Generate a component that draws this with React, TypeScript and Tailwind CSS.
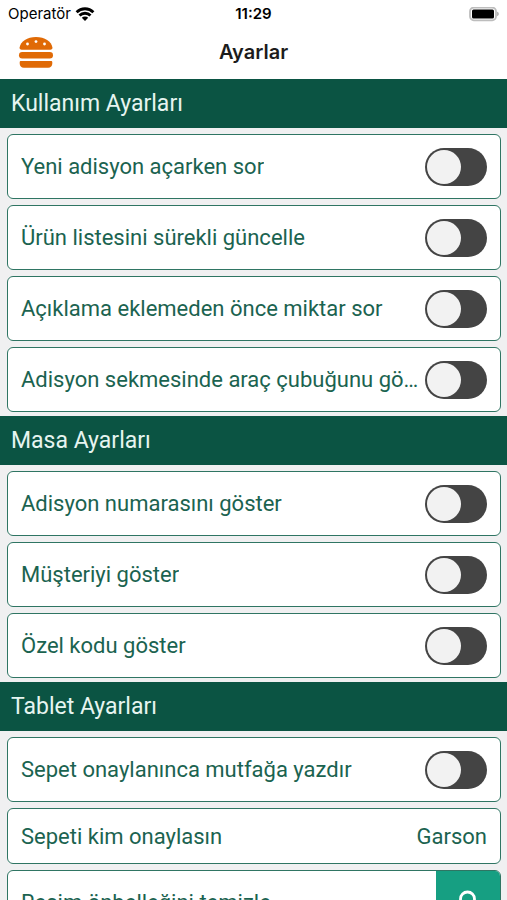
import React, { useState } from 'react';

interface Setting {
  id: string;
  label: string;
}

interface ToggleRowProps {
  setting: Setting;
  checked: boolean;
  onChange: (id: string) => void;
}

const usageSettings: Setting[] = [
  { id: 'askOnNewBill', label: 'Yeni adisyon açarken sor' },
  { id: 'refreshProducts', label: 'Ürün listesini sürekli güncelle' },
  { id: 'askAmountFirst', label: 'Açıklama eklemeden önce miktar sor' },
  { id: 'showToolbar', label: 'Adisyon sekmesinde araç çubuğunu göster' },
];

const tableSettings: Setting[] = [
  { id: 'showBillNumber', label: 'Adisyon numarasını göster' },
  { id: 'showCustomer', label: 'Müşteriyi göster' },
  { id: 'showCustomCode', label: 'Özel kodu göster' },
];

const tabletSettings: Setting[] = [
  { id: 'printToKitchen', label: 'Sepet onaylanınca mutfağa yazdır' },
];

const StatusBar: React.FC = () => (
  <div className="grid h-7 grid-cols-3 items-center px-2 text-[15px] text-black">
    <div className="flex items-center gap-1">
      <span>Operatör</span>
      <svg viewBox="0 0 20 15" className="h-[15px] w-5" aria-hidden="true">
        <g fill="none" stroke="#000" strokeWidth="2.8">
          <path d="M1.6 5.2a12 12 0 0 1 16.8 0" />
          <path d="M4.5 8.5a7.8 7.8 0 0 1 11 0" />
        </g>
        <path d="M10 14l-3.2-3.2a4.5 4.5 0 0 1 6.4 0z" />
      </svg>
    </div>
    <span className="text-center font-semibold">11:29</span>
    <svg viewBox="0 0 31 15" className="h-[15px] w-[31px] justify-self-end" aria-hidden="true">
      <rect x="2" y="0.5" width="26" height="12.8" rx="3.8" fill="#fff" stroke="#bdbdbd" strokeWidth="1.8" />
      <rect x="4" y="2.4" width="22" height="9" rx="1.5" />
      <path d="M29.2 4.8c2 .6 2 3.8 0 4.4z" fill="#a5a5a5" />
    </svg>
  </div>
);

const BurgerIcon: React.FC = () => (
  <svg viewBox="0 0 36 32" className="h-8 w-9" aria-hidden="true">
    <g fill="#e06a06">
      <path d="M3.6 13.8c-1.4 0-2.2-.9-2-2.2C2.6 5.4 9.2 1 18 1s15.4 4.4 16.4 10.6c.2 1.3-.6 2.2-2 2.2z" />
      <rect x="1" y="16" width="34" height="6.4" rx="3.2" />
      <path d="M3 25h30c.8 0 1.3.5 1.3 1.3v1.2c0 2.6-1.6 4.2-4.2 4.2H5.9c-2.6 0-4.2-1.6-4.2-4.2v-1.2C1.7 25.5 2.2 25 3 25z" />
    </g>
    <g fill="#fff">
      <circle cx="9.5" cy="8" r="1.4" />
      <circle cx="18" cy="5.6" r="1.4" />
      <circle cx="26.5" cy="8" r="1.4" />
    </g>
  </svg>
);

const Section: React.FC<{ title: string; children: React.ReactNode }> = ({ title, children }) => (
  <section>
    <h2 className="flex h-[49px] items-center bg-[#0b5443] px-[11px] pt-0.5 text-[23px] text-[#e6f5f0]">
      {title}
    </h2>
    <div className="flex flex-col gap-1.5 pt-1.5 pr-1.5 pb-1 pl-[7px]">{children}</div>
  </section>
);

const ToggleRow: React.FC<ToggleRowProps> = ({ setting, checked, onChange }) => (
  <div className="flex h-[65px] items-center justify-between gap-0.5 rounded-md border border-[#2f7563] bg-white px-[13px]">
    <label htmlFor={setting.id} className="min-w-0 truncate leading-8">
      {setting.label}
    </label>
    <input
      id={setting.id}
      type="checkbox"
      role="switch"
      checked={checked}
      onChange={() => onChange(setting.id)}
      className="h-[38px] w-[62px] shrink-0 appearance-none rounded-full bg-[#444444] p-0.5 before:block before:size-[34px] before:rounded-full before:bg-[#f2f2f2] checked:bg-[#169f82] checked:before:ml-6"
    />
  </div>
);

const App: React.FC = () => {
  const [enabled, setEnabled] = useState<Record<string, boolean>>({});

  const toggle = (id: string) => {
    setEnabled((prev) => ({ ...prev, [id]: !prev[id] }));
  };

  const renderToggles = (settings: Setting[]) =>
    settings.map((setting) => (
      <ToggleRow key={setting.id} setting={setting} checked={!!enabled[setting.id]} onChange={toggle} />
    ));

  return (
    <div className="flex h-screen flex-col bg-[#f0f0f1] text-[#1b6350]">
      <header className="bg-white font-[Inter,sans-serif]">
        <StatusBar />
        <div className="grid h-[51px] grid-cols-3 items-center px-[18px] pb-1">
          <button type="button" aria-label="Menü" className="justify-self-start">
            <BurgerIcon />
          </button>
          <h1 className="text-center text-xl font-semibold text-[#1c1c1c]">Ayarlar</h1>
        </div>
      </header>

      <main className="min-h-0 flex-1 overflow-y-auto font-[Roboto,sans-serif] text-[22px] [scrollbar-width:none]">
        <Section title="Kullanım Ayarları">{renderToggles(usageSettings)}</Section>
        <Section title="Masa Ayarları">{renderToggles(tableSettings)}</Section>
        <Section title="Tablet Ayarları">
          {renderToggles(tabletSettings)}
          <button
            type="button"
            className="flex h-14 items-center justify-between rounded-md border border-[#2f7563] bg-white px-[13px]"
          >
            <span>Sepeti kim onaylasın</span>
            <span>Garson</span>
          </button>
          <div className="flex h-[65px] items-center justify-between overflow-hidden rounded-md border border-[#2f7563] bg-white pl-[13px]">
            <span>Resim önbelleğini temizle</span>
            <button
              type="button"
              aria-label="Resim önbelleğini temizle"
              className="flex h-full w-16 items-center justify-center bg-[#169f82] text-white"
            >
              <svg viewBox="0 0 26 26" className="size-[26px]" fill="none" stroke="currentColor" strokeWidth="2.8" aria-hidden="true">
                <circle cx="12.5" cy="9" r="7" />
                <path d="M17 15l5 8" strokeLinecap="round" />
              </svg>
            </button>
          </div>
        </Section>
      </main>
    </div>
  );
};

export default App;
